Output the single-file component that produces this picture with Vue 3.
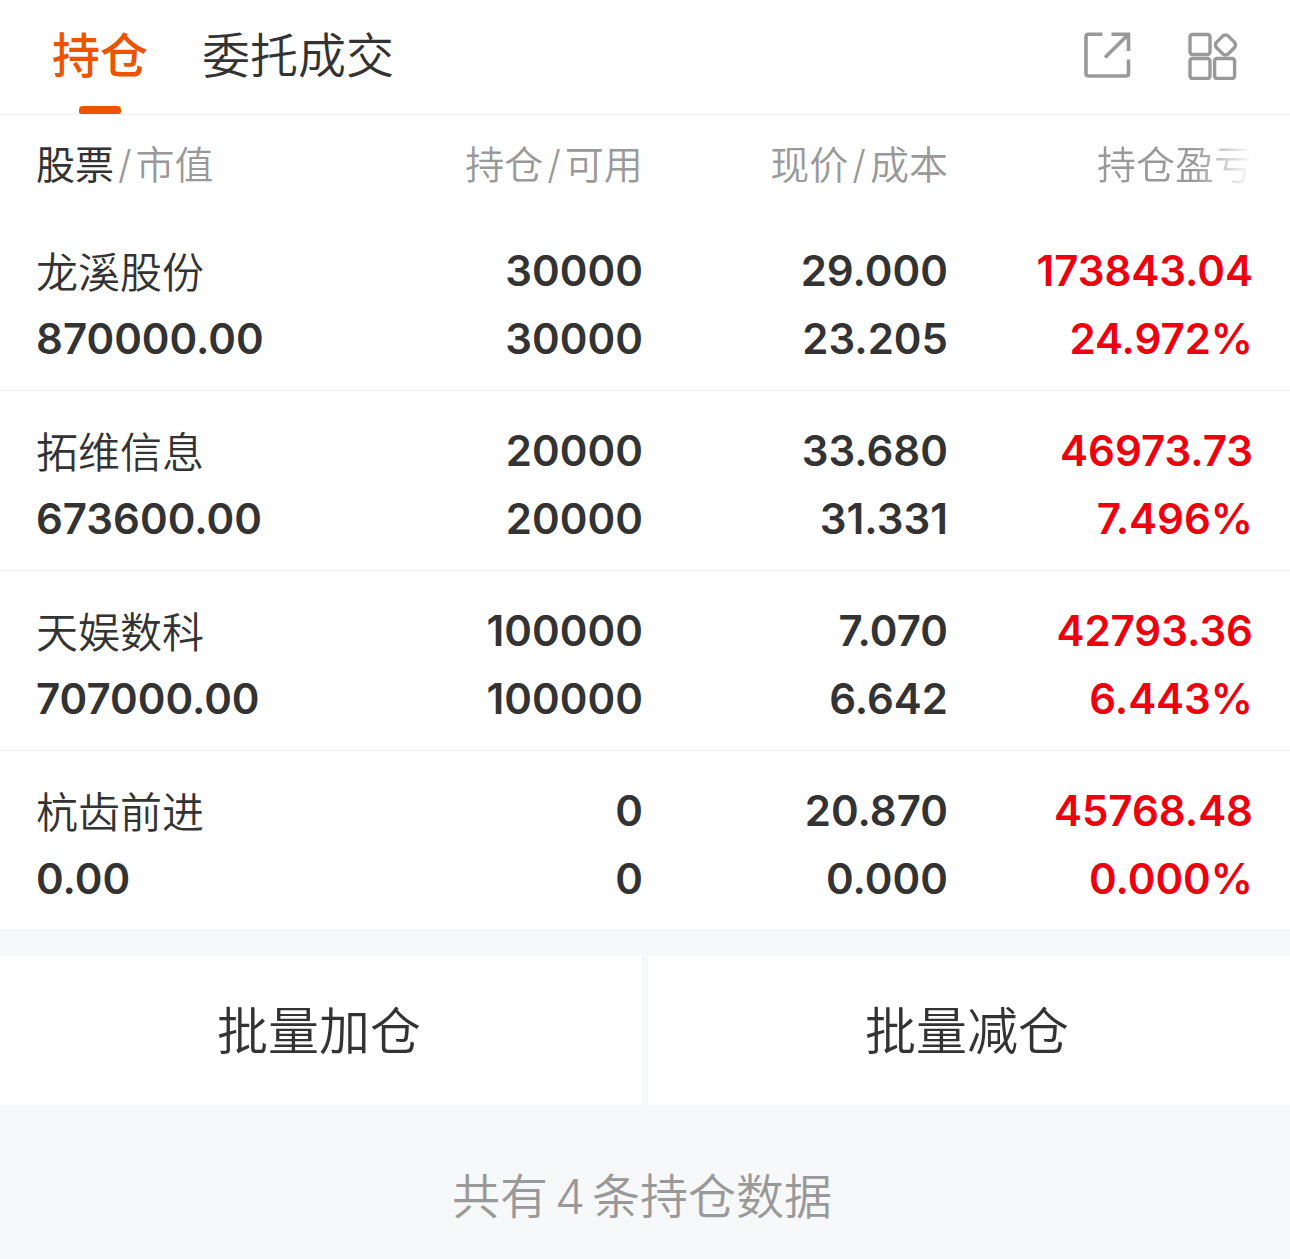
<template>
  <div class="holdings-page">
    <header class="topbar">
      <nav class="tabs">
        <button
          v-for="tab in tabs"
          :key="tab"
          type="button"
          class="tab"
          :class="{ active: tab === activeTab }"
          @click="activeTab = tab"
        >
          {{ tab }}
        </button>
      </nav>
      <div class="tools">
        <button type="button" class="tool" aria-label="分享">
          <svg width="50" height="50" viewBox="0 0 50 50" fill="none" stroke="#999" stroke-width="3.6">
            <path d="M18.5 4.2H4.5Q2 4.2 2 6.7V43.5Q2 46 4.5 46H42Q44.5 46 44.5 43.5V29.5" />
            <path d="M27.5 4.2H44.5V21" />
            <path d="M44 4.7L21 27.5" />
          </svg>
        </button>
        <button type="button" class="tool" aria-label="更多功能">
          <svg width="50" height="50" viewBox="0 0 50 50" fill="none" stroke="#999" stroke-width="3.4">
            <rect x="2" y="4.5" width="20" height="20" rx="2.5" />
            <rect x="2" y="28.5" width="20" height="20" rx="2.5" />
            <rect x="26.6" y="28.5" width="20" height="20" rx="2.5" />
            <rect x="29.2" y="6.7" width="16.5" height="16.5" rx="4" transform="rotate(45 37.5 15)" />
          </svg>
        </button>
      </div>
    </header>

    <table class="holdings">
      <thead>
        <tr>
          <th class="col-name"><b>股票</b><i>/</i>市值</th>
          <th class="col-num">持仓<i>/</i>可用</th>
          <th class="col-num">现价<i>/</i>成本</th>
          <th class="col-num"><span class="fade">持仓盈亏</span></th>
        </tr>
      </thead>
      <tbody>
        <tr v-for="item in holdings" :key="item.name">
          <td>
            <div class="name">{{ item.name }}</div>
            <div>{{ item.value }}</div>
          </td>
          <td>
            <div>{{ item.amount }}</div>
            <div>{{ item.available }}</div>
          </td>
          <td>
            <div>{{ item.price }}</div>
            <div>{{ item.cost }}</div>
          </td>
          <td class="up">
            <div>{{ item.profit }}</div>
            <div>{{ item.rate }}</div>
          </td>
        </tr>
      </tbody>
    </table>

    <div class="actions">
      <button type="button">批量加仓</button>
      <button type="button">批量减仓</button>
    </div>

    <p class="summary">共有<span>{{ holdings.length }}</span>条持仓数据</p>
  </div>
</template>

<script setup>
import { ref } from 'vue';

const tabs = ['持仓', '委托成交'];
const activeTab = ref('持仓');

const holdings = ref([
  { name: '龙溪股份', value: '870000.00', amount: '30000', available: '30000', price: '29.000', cost: '23.205', profit: '173843.04', rate: '24.972%' },
  { name: '拓维信息', value: '673600.00', amount: '20000', available: '20000', price: '33.680', cost: '31.331', profit: '46973.73', rate: '7.496%' },
  { name: '天娱数科', value: '707000.00', amount: '100000', available: '100000', price: '7.070', cost: '6.642', profit: '42793.36', rate: '6.443%' },
  { name: '杭齿前进', value: '0.00', amount: '0', available: '0', price: '20.870', cost: '0.000', profit: '45768.48', rate: '0.000%' }
]);
</script>

<style>
body {
  background: #f7f8fa;
}
</style>

<style scoped>
.holdings-page {
  color: #333;
  font-family: Inter, "Noto Sans CJK SC", sans-serif;
  font-weight: 350;
}
button {
  padding: 0;
  border: 0;
  background: none;
  color: inherit;
  font-family: inherit;
  font-weight: inherit;
  cursor: pointer;
}
.topbar {
  display: flex;
  justify-content: space-between;
  height: 114px;
  padding: 0 52px;
  background: #fff;
  border-bottom: 1px solid #eee;
}
.tabs {
  display: flex;
  gap: 54px;
}
.tab {
  display: flex;
  flex-direction: column;
  align-items: center;
  justify-content: space-between;
  font-size: 48px;
  line-height: 112px;
}
.tab.active {
  color: #eb5502;
  font-weight: 500;
}
.tab.active::after {
  content: "";
  width: 42px;
  height: 8px;
  border-radius: 4px 4px 2px 2px;
  background: #eb5502;
  margin-top: -6px;
}
.tools {
  display: flex;
  align-items: center;
  gap: 54px;
  padding-bottom: 4px;
}
.tool svg {
  display: block;
}
.holdings {
  width: 100%;
  table-layout: fixed;
  border-collapse: collapse;
  background: #fff;
}
th,
td {
  padding: 0;
  text-align: right;
}
th:first-child,
td:first-child {
  padding-left: 36px;
  text-align: left;
}
th:last-child,
td:last-child {
  padding-right: 37px;
}
.col-num {
  width: 23.65%;
}
th {
  height: 94px;
  padding-bottom: 2px;
  color: #999;
  font-size: 39px;
  font-weight: 350;
}
th b {
  color: #333;
  font-weight: 400;
}
th i {
  margin: 0 4px;
  font-style: normal;
}
.fade {
  -webkit-mask-image: linear-gradient(to right, #000 62%, transparent);
  mask-image: linear-gradient(to right, #000 62%, transparent);
}
td {
  padding-top: 26px;
  padding-bottom: 17px;
  border-bottom: 1px solid #eee;
  font-size: 42px;
  font-weight: 600;
  line-height: 68px;
}
.name {
  padding-top: 4px;
  line-height: 64px;
  font-weight: 350;
}
.up {
  color: #ef000f;
}
.actions {
  display: flex;
  gap: 6px;
  margin-top: 24px;
}
.actions button {
  flex: 1;
  height: 150px;
  padding: 0 4px 4px 0;
  background: #fff;
  font-size: 51px;
}
.summary {
  margin: 0;
  padding: 56px 6px 26px 0;
  color: #999;
  font-size: 48px;
  line-height: 72px;
  text-align: center;
}
.summary span {
  margin: 0 7px;
}
</style>
